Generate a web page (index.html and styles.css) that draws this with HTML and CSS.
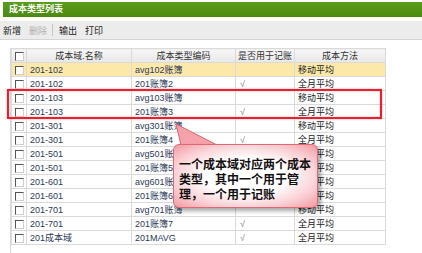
FILE: index.html
```html
<!DOCTYPE html>
<html lang="zh-CN">
<head>
    <meta charset="UTF-8">
    <title>成本类型列表</title>
    <link rel="stylesheet" href="styles.css">
</head>
<body>
    <div class="panel-title">成本类型列表</div>

    <div class="toolbar">
        <span class="tool">新增</span>
        <span class="tool disabled">删除</span>
        <span class="tool-sep"></span>
        <span class="tool">输出</span>
        <span class="tool">打印</span>
    </div>

    <div class="grid">
        <table class="grid-table">
            <colgroup>
                <col class="col-check">
                <col class="col-name">
                <col class="col-code">
                <col class="col-flag">
                <col class="col-method">
            </colgroup>
            <thead>
                <tr>
                    <th><span class="check"></span></th>
                    <th>成本域.名称</th>
                    <th>成本类型编码</th>
                    <th>是否用于记账</th>
                    <th>成本方法</th>
                </tr>
            </thead>
            <tbody>
                <tr class="selected">
                    <td><span class="check"></span></td>
                    <td>201-102</td>
                    <td>avg102账簿</td>
                    <td class="flag"></td>
                    <td class="method">移动平均</td>
                </tr>
                <tr>
                    <td><span class="check"></span></td>
                    <td>201-102</td>
                    <td>201账簿2</td>
                    <td class="flag">√</td>
                    <td class="method">全月平均</td>
                </tr>
                <tr>
                    <td><span class="check"></span></td>
                    <td>201-103</td>
                    <td>avg103账簿</td>
                    <td class="flag"></td>
                    <td class="method">移动平均</td>
                </tr>
                <tr>
                    <td><span class="check"></span></td>
                    <td>201-103</td>
                    <td>201账簿3</td>
                    <td class="flag">√</td>
                    <td class="method">全月平均</td>
                </tr>
                <tr>
                    <td><span class="check"></span></td>
                    <td>201-301</td>
                    <td>avg301账簿</td>
                    <td class="flag"></td>
                    <td class="method">移动平均</td>
                </tr>
                <tr>
                    <td><span class="check"></span></td>
                    <td>201-301</td>
                    <td>201账簿4</td>
                    <td class="flag">√</td>
                    <td class="method">全月平均</td>
                </tr>
                <tr>
                    <td><span class="check"></span></td>
                    <td>201-501</td>
                    <td>avg501账簿</td>
                    <td class="flag"></td>
                    <td class="method">移动平均</td>
                </tr>
                <tr>
                    <td><span class="check"></span></td>
                    <td>201-501</td>
                    <td>201账簿5</td>
                    <td class="flag">√</td>
                    <td class="method">全月平均</td>
                </tr>
                <tr>
                    <td><span class="check"></span></td>
                    <td>201-601</td>
                    <td>avg601账簿</td>
                    <td class="flag"></td>
                    <td class="method">移动平均</td>
                </tr>
                <tr>
                    <td><span class="check"></span></td>
                    <td>201-601</td>
                    <td>201账簿6</td>
                    <td class="flag">√</td>
                    <td class="method">全月平均</td>
                </tr>
                <tr>
                    <td><span class="check"></span></td>
                    <td>201-701</td>
                    <td>avg701账簿</td>
                    <td class="flag"></td>
                    <td class="method">移动平均</td>
                </tr>
                <tr>
                    <td><span class="check"></span></td>
                    <td>201-701</td>
                    <td>201账簿7</td>
                    <td class="flag">√</td>
                    <td class="method">全月平均</td>
                </tr>
                <tr>
                    <td><span class="check"></span></td>
                    <td>201成本域</td>
                    <td>201MAVG</td>
                    <td class="flag">√</td>
                    <td class="method">全月平均</td>
                </tr>
            </tbody>
        </table>
    </div>

    <!-- annotation drawn over the grid -->
    <div class="highlight"></div>
    <svg class="callout-tail" width="60" height="30" viewBox="0 0 60 30">
        <polygon points="3,1 8,22 44,22" fill="#f6a2aa" stroke="#e0606c" stroke-width="1"/>
    </svg>
    <div class="callout">一个成本域对应两个成本类型，其中一个用于管理，一个用于记账</div>
</body>
</html>
```

FILE: styles.css
```css
* {
    margin: 0;
    padding: 0;
    box-sizing: border-box;
}

body {
    font-family: "Liberation Sans", "Noto Sans CJK SC", sans-serif;
    font-size: 9px;
    color: #333;
    background: #fff;
    width: 422px;
    height: 253px;
    overflow: hidden;
    padding-top: 2px;
}

.panel-title {
    margin-left: 3px;
    height: 15px;
    line-height: 15px;
    padding-left: 6px;
    background: linear-gradient(#5a9c1c, #4b8a10);
    color: #fff;
    font-weight: bold;
}

.toolbar {
    margin-top: 4px;
    height: 19px;
    display: flex;
    align-items: center;
    padding-left: 3px;
    background: #ececec;
    border-bottom: 1px solid #d4d4d4;
}

.tool {
    color: #222;
    margin-right: 8px;
}

.tool.disabled {
    color: #b0b0b0;
}

.tool-sep {
    width: 1px;
    height: 12px;
    background: #c4c4c4;
    margin: 0 6px 0 -3px;
}

.grid {
    margin: 8px 0 0 10px;
    width: 374px;
    height: 210px;
    border-left: 1px solid #d8d8d8;
}

.grid-table {
    width: 374px;
    border-collapse: collapse;
    table-layout: fixed;
}

.col-check { width: 15px; }
.col-name { width: 105px; }
.col-code { width: 104px; }
.col-flag { width: 59px; }
.col-method { width: 91px; }

.grid-table th,
.grid-table td {
    height: 14px;
    border: 1px solid #dadada;
    white-space: nowrap;
    overflow: hidden;
}

.grid-table th {
    font-weight: normal;
    color: #333;
    background: linear-gradient(#f6f6f6, #e8e8e8);
    text-align: center;
}

.grid-table td {
    padding-left: 3px;
    color: #2c3a58;
}

.grid-table td:first-child,
.grid-table th:first-child {
    padding: 0;
    text-align: center;
}

.grid-table td.flag {
    color: #888;
    padding-left: 4px;
}

.grid-table td.method {
    color: #222;
}

.grid-table tr.selected td {
    background: #fce8a8;
}

.check {
    display: inline-block;
    width: 9px;
    height: 9px;
    vertical-align: middle;
    background: #fff;
    border-top: 1px solid #555;
    border-left: 1px solid #555;
    border-right: 1px solid #cfcfcf;
    border-bottom: 1px solid #cfcfcf;
}

.highlight {
    position: absolute;
    left: 7px;
    top: 89px;
    width: 375px;
    height: 30px;
    border: 2px solid #e5222c;
    box-shadow: 0 0 2px #f4a0b0, inset 0 0 2px #f4a0b0;
}

.callout-tail {
    position: absolute;
    left: 173px;
    top: 123px;
}

.callout {
    position: absolute;
    left: 173px;
    top: 144px;
    width: 145px;
    height: 64px;
    padding: 13px 2px 0 5px;
    border: 1px solid #e06872;
    border-radius: 6px;
    background: radial-gradient(ellipse at center, #fff 40%, #fbd0d5 72%, #f199a2 100%);
    box-shadow: 3px 3px 4px rgba(0, 0, 0, 0.35);
    font-size: 12px;
    line-height: 15px;
    font-weight: bold;
    color: #111;
}
```
